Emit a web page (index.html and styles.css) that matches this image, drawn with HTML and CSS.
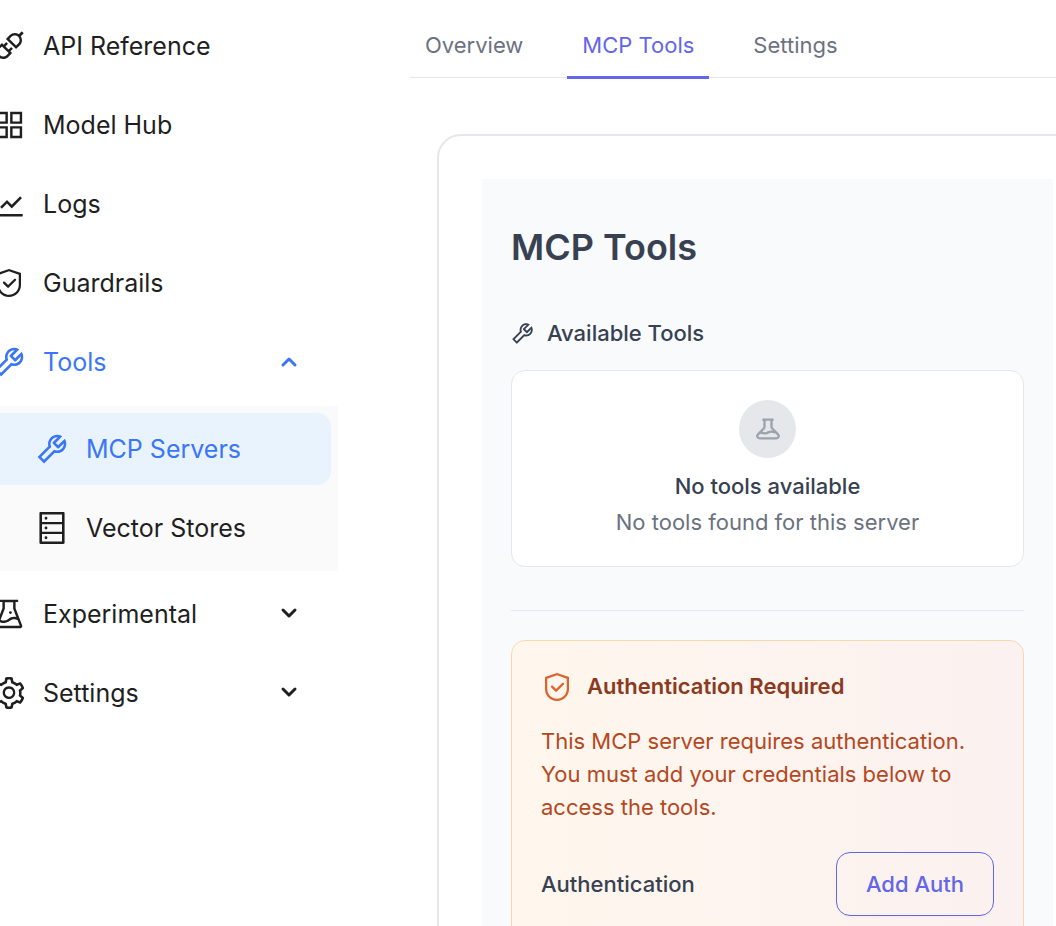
FILE: index.html
```html
<!DOCTYPE html>
<html lang="en">
<head>
<meta charset="utf-8">
<title>MCP Tools</title>
<link rel="stylesheet" href="styles.css">
</head>
<body>
<svg class="sprite" aria-hidden="true">
  <symbol id="api" viewBox="64 64 896 896"><path d="M917.7 148.8l-42.4-42.4c-1.6-1.6-3.6-2.3-5.7-2.3s-4.1.8-5.7 2.3l-76.1 76.1a199.27 199.27 0 00-112.1-34.3c-51.2 0-102.4 19.5-141.5 58.6L432.3 308.7a8.03 8.03 0 000 11.3L704 591.7c1.6 1.6 3.6 2.3 5.7 2.3 2 0 4.1-.8 5.7-2.3l101.9-101.9c68.9-69 77-175.7 24.3-253.5l76.1-76.1c3.1-3.2 3.1-8.3 0-11.4zM769.1 441.7l-59.4 59.4-186.8-186.8 59.4-59.4c24.9-24.9 58.1-38.7 93.4-38.7 35.3 0 68.4 13.7 93.4 38.7 24.9 24.9 38.7 58.1 38.7 93.4 0 35.3-13.8 68.4-38.7 93.4zm-190.2 105a8.03 8.03 0 00-11.3 0L501 613.3 410.7 523l66.7-66.7c3.1-3.1 3.1-8.2 0-11.3L441 408.6a8.03 8.03 0 00-11.3 0L363 475.3l-43-43a7.85 7.85 0 00-5.7-2.3c-2 0-4.1.8-5.7 2.3L206.8 534.2c-68.9 69-77 175.7-24.3 253.5l-76.1 76.1a8.03 8.03 0 000 11.3l42.4 42.4c1.6 1.6 3.6 2.3 5.7 2.3s4.1-.8 5.7-2.3l76.1-76.1c33.7 22.9 72.9 34.3 112.1 34.3 51.2 0 102.4-19.5 141.5-58.6l101.9-101.9c3.1-3.1 3.1-8.2 0-11.3l-43-43 66.7-66.7c3.1-3.1 3.1-8.2 0-11.3l-36.6-36.2zM441.7 769.1a131.32 131.32 0 01-93.4 38.7c-35.3 0-68.4-13.7-93.4-38.7a131.32 131.32 0 01-38.7-93.4c0-35.3 13.7-68.4 38.7-93.4l59.4-59.4 186.8 186.8-59.4 59.4z"/></symbol>
  <symbol id="grid" viewBox="64 64 896 896"><path fill-rule="evenodd" d="M144 144h336v336H144zM212 212v200h200V212zM544 144h336v336H544zM612 212v200h200V212zM144 544h336v336H144zM212 612v200h200V612zM544 544h336v336H544zM612 612v200h200V612z"/></symbol>
  <symbol id="chart" viewBox="64 64 896 896"><path d="M888 792H200V168c0-4.4-3.6-8-8-8h-56c-4.4 0-8 3.6-8 8v688c0 4.4 3.6 8 8 8h752c4.4 0 8-3.6 8-8v-56c0-4.4-3.6-8-8-8zM305.8 637.7c3.1 3.1 8.1 3.1 11.3 0l138.3-137.6L583 628.5c3.1 3.1 8.2 3.1 11.3 0l275.4-275.3c3.1-3.1 3.1-8.2 0-11.3l-39.6-39.6a8.03 8.03 0 00-11.3 0l-230 229.9L461.4 404a8.03 8.03 0 00-11.3 0L266.3 586.7a8.03 8.03 0 000 11.3l39.5 39.7z"/></symbol>
  <symbol id="shield" viewBox="0 0 1024 1024"><path d="M512 64L128 192v384c0 212.1 171.9 384 384 384s384-171.9 384-384V192L512 64zm312 512c0 172.3-139.7 312-312 312S200 748.3 200 576V246l312-110 312 110v330z"/><path d="M378.4 475.1a35.91 35.91 0 00-50.9 0 35.91 35.91 0 000 50.9l129.4 129.4 2.1 2.1a33.98 33.98 0 0048.1 0L730.6 434a33.98 33.98 0 000-48.1l-2.8-2.8a33.98 33.98 0 00-48.1 0L483 579.7 378.4 475.1z"/></symbol>
  <symbol id="tool" viewBox="64 64 896 896"><path d="M876.6 239.5c-.5-.9-1.2-1.8-2-2.5-5-5-13.1-5-18.1 0L684.2 409.3l-67.9-67.9L788.7 169c.8-.8 1.4-1.6 2-2.5 3.6-6.1 1.6-13.9-4.5-17.5-98.2-58-226.8-44.7-311.3 39.7-67 67-89.2 162-66.5 247.4l-293 293c-3 3-2.8 7.9.3 11l169.7 169.7c3.1 3.1 8.1 3.3 11 .3l292.9-292.9c85.5 22.8 180.5.7 247.6-66.4 84.4-84.5 97.7-213.1 39.7-311.3zM786 499.8c-58.1 58.1-145.3 69.3-214.6 33.6l-8.8 8.8-.1-.1-274 274.1-79.2-79.2 230.1-230.1s0 .1.1.1l52.8-52.8c-35.7-69.3-24.5-156.5 33.6-214.6a184.2 184.2 0 01144-53.5L537 318.9a32.05 32.05 0 000 45.3l124.5 124.5a32.05 32.05 0 0045.3 0l132.8-132.8c3.7 51.8-14.4 104.8-53.6 143.9z"/></symbol>
  <symbol id="database" viewBox="64 64 896 896"><path d="M832 64H192c-17.7 0-32 14.3-32 32v832c0 17.7 14.3 32 32 32h640c17.7 0 32-14.3 32-32V96c0-17.7-14.3-32-32-32zm-600 72h560v208H232V136zm560 480H232V408h560v208zm0 272H232V680h560v208zM304 240a40 40 0 1080 0 40 40 0 10-80 0zm0 272a40 40 0 1080 0 40 40 0 10-80 0zm0 272a40 40 0 1080 0 40 40 0 10-80 0z"/></symbol>
  <symbol id="flask" viewBox="64 64 896 896"><path d="M512 472a40 40 0 1080 0 40 40 0 10-80 0zm367 352.9L696.3 352V178H768v-68H256v68h71.7v174L145 824.9c-2.8 7.4-4.3 15.2-4.3 23.1 0 35.3 28.7 64 64 64h614.6c7.9 0 15.7-1.5 23.1-4.3 33-12.7 49.4-49.8 36.6-82.8zM395.7 364.7V180h232.6v184.7L719.2 600c-20.7-5.3-42.1-8-63.9-8-61.2 0-119.2 21.5-165.3 60a188.78 188.78 0 01-121.3 43.9c-32.7 0-64.1-8.3-91.8-23.7l118.8-307.5zM210.5 844l41.7-107.8c35.7 18.1 75.4 27.8 116.6 27.8 61.2 0 119.2-21.5 165.3-60 33.9-28.2 76.3-43.9 121.3-43.9 35 0 68.4 9.5 97.6 27.1L813.5 844h-603z"/></symbol>
  <symbol id="gear" viewBox="64 64 896 896"><path d="M924.8 625.7l-65.5-56c3.1-19 4.7-38.4 4.7-57.8s-1.6-38.8-4.7-57.8l65.5-56a32.03 32.03 0 009.3-35.2l-.9-2.6a443.74 443.74 0 00-79.7-137.9l-1.8-2.1a32.12 32.12 0 00-35.1-9.5l-81.3 28.9c-30-24.6-63.5-44-99.7-57.6l-15.7-85a32.05 32.05 0 00-25.8-25.7l-2.7-.5c-52.1-9.4-106.9-9.4-159 0l-2.7.5a32.05 32.05 0 00-25.8 25.7l-15.8 85.4a351.86 351.86 0 00-99 57.4l-81.9-29.1a32 32 0 00-35.1 9.5l-1.8 2.1a446.02 446.02 0 00-79.7 137.9l-.9 2.6c-4.5 12.5-.8 26.5 9.3 35.2l66.3 56.6c-3.1 18.8-4.6 38-4.6 57.1 0 19.2 1.5 38.4 4.6 57.1L99 625.5a32.03 32.03 0 00-9.3 35.2l.9 2.6c18.1 50.4 44.9 96.9 79.7 137.9l1.8 2.1a32.12 32.12 0 0035.1 9.5l81.9-29.1c29.8 24.5 63.1 43.9 99 57.4l15.8 85.4a32.05 32.05 0 0025.8 25.7l2.7.5a449.4 449.4 0 00159 0l2.7-.5a32.05 32.05 0 0025.8-25.7l15.7-85a350 350 0 0099.7-57.6l81.3 28.9a32 32 0 0035.1-9.5l1.8-2.1c34.8-41.1 61.6-87.5 79.7-137.9l.9-2.6c4.5-12.3.8-26.3-9.3-35zM788.3 465.9c2.5 15.1 3.8 30.6 3.8 46.1s-1.3 31-3.8 46.1l-6.6 40.1 74.7 63.9a370.03 370.03 0 01-42.6 73.6L721 702.8l-31.4 25.8c-23.9 19.6-50.5 35-79.3 45.8l-38.1 14.3-17.9 97a377.5 377.5 0 01-85 0l-17.9-97.2-37.8-14.5c-28.5-10.8-55-26.2-78.7-45.7l-31.4-25.9-93.4 33.2c-17-22.9-31.2-47.6-42.6-73.6l75.5-64.5-6.5-40c-2.4-14.9-3.7-30.3-3.7-45.5 0-15.3 1.2-30.6 3.7-45.5l6.5-40-75.5-64.5c11.3-26.1 25.6-50.7 42.6-73.6l93.4 33.2 31.4-25.9c23.7-19.5 50.2-34.9 78.7-45.7l37.9-14.3 17.9-97.2c28.1-3.2 56.8-3.2 85 0l17.9 97 38.1 14.3c28.7 10.8 55.4 26.2 79.3 45.8l31.4 25.8 92.8-32.9c17 22.9 31.2 47.6 42.6 73.6L781.8 426l6.5 39.9zM512 326c-97.2 0-176 78.8-176 176s78.8 176 176 176 176-78.8 176-176-78.8-176-176-176zm79.2 255.2A111.6 111.6 0 01512 614c-29.9 0-58-11.7-79.2-32.8A111.6 111.6 0 01400 502c0-29.9 11.7-58 32.8-79.2C454 401.6 482.1 390 512 390c29.9 0 58 11.6 79.2 32.8A111.6 111.6 0 01624 502c0 29.9-11.7 58-32.8 79.2z"/></symbol>
</svg>
<div class="app">
  <nav class="sidebar" aria-label="Main">
    <a class="item" href="#"><svg class="icon"><use href="#api"/></svg><span>API Reference</span></a>
    <a class="item" href="#"><svg class="icon"><use href="#grid"/></svg><span>Model Hub</span></a>
    <a class="item" href="#"><svg class="icon"><use href="#chart"/></svg><span>Logs</span></a>
    <a class="item" href="#"><svg class="icon"><use href="#shield"/></svg><span>Guardrails</span></a>
    <button class="item active" type="button" aria-expanded="true"><svg class="icon"><use href="#tool"/></svg><span>Tools</span><svg class="chevron" viewBox="0 0 20 20"><path d="M4 13l6-6 6 6"/></svg></button>
    <div class="submenu">
      <a class="item active selected" href="#"><svg class="icon"><use href="#tool"/></svg><span>MCP Servers</span></a>
      <a class="item" href="#"><svg class="icon"><use href="#database"/></svg><span>Vector Stores</span></a>
    </div>
    <button class="item" type="button" aria-expanded="false"><svg class="icon"><use href="#flask"/></svg><span>Experimental</span><svg class="chevron" viewBox="0 0 20 20"><path d="M4 6l6 6 6-6"/></svg></button>
    <button class="item" type="button" aria-expanded="false"><svg class="icon"><use href="#gear"/></svg><span>Settings</span><svg class="chevron" viewBox="0 0 20 20"><path d="M4 6l6 6 6-6"/></svg></button>
  </nav>
  <main class="main">
    <div class="tabs" role="tablist">
      <button class="tab" type="button" role="tab" aria-selected="false">Overview</button>
      <button class="tab current" type="button" role="tab" aria-selected="true">MCP Tools</button>
      <button class="tab" type="button" role="tab" aria-selected="false">Settings</button>
    </div>
    <section class="panel">
      <div class="content">
        <h1 class="title">MCP Tools</h1>
        <h2 class="subtitle"><svg class="icon-small"><use href="#tool"/></svg><span>Available Tools</span></h2>
        <div class="empty">
          <div class="badge"><svg viewBox="0 0 24 24"><path d="M19.428 15.428a2 2 0 00-1.022-.547l-2.387-.477a6 6 0 00-3.86.517l-.318.158a6 6 0 01-3.86.517L6.05 15.21a2 2 0 00-1.806.547M8 4h8l-1 1v5.172a2 2 0 00.586 1.414l5 5c1.26 1.26.367 3.414-1.415 3.414H4.828c-1.782 0-2.674-2.154-1.414-3.414l5-5A2 2 0 009 10.172V5L8 4z"/></svg></div>
          <p class="empty-title">No tools available</p>
          <p class="empty-text">No tools found for this server</p>
        </div>
        <hr class="divider">
        <div class="auth">
          <h3 class="auth-title"><svg class="icon"><use href="#shield"/></svg><span>Authentication Required</span></h3>
          <p class="auth-text">This MCP server requires authentication. You must add your credentials below to access the tools.</p>
          <div class="auth-row">
            <span>Authentication</span>
            <button class="add" type="button">Add Auth</button>
          </div>
        </div>
      </div>
    </section>
  </main>
</div>
</body>
</html>
```
FILE: styles.css
```css
* { box-sizing: border-box; }
body {
  margin: 0;
  height: 100vh;
  overflow: hidden;
  background: #fff;
  color: #1f1f1f;
  font-family: Inter, "Liberation Sans", sans-serif;
  font-size: 22px;
  line-height: 33px;
}
h1, h2, h3, p { margin: 0; }
button { font: inherit; cursor: pointer; }
.sprite { display: none; }
.app { display: flex; height: 100vh; overflow: hidden; }

.sidebar {
  display: flex;
  flex-direction: column;
  gap: 7px;
  flex: none;
  width: 378px;
  margin-left: -40px;
  padding-top: 10px;
  font-size: 25px;
}
.item {
  display: flex;
  align-items: center;
  gap: 18px;
  height: 72px;
  margin-right: 7px;
  padding: 0 32px 0 33px;
  border: 0;
  border-radius: 14px;
  background: none;
  color: #1f1f1f;
  text-align: left;
  text-decoration: none;
}
.item.active { color: #3b76f6; }
.item.selected { background: #e8f3fe; }
.submenu {
  display: flex;
  flex-direction: column;
  gap: 7px;
  margin-top: 1px;
  padding: 7px 0;
  background: #fafafa;
}
.submenu .item { padding-left: 76px; }
.icon { flex: none; width: 32px; height: 32px; fill: currentColor; }
.chevron {
  width: 20px;
  height: 20px;
  margin-left: auto;
  fill: none;
  stroke: currentColor;
  stroke-width: 3;
  stroke-linecap: round;
  stroke-linejoin: round;
}

.main { flex: 1; margin: 0 -42px 0 72px; }
.tabs { display: flex; gap: 29px; height: 78px; border-bottom: 1px solid #e5e7eb; }
.tab {
  height: 79px;
  padding: 14px 15px 0;
  border: 0;
  border-bottom: 3px solid transparent;
  background: none;
  color: #6b7280;
}
.tab.current { color: #6366e9; border-bottom-color: #6366e9; }

.panel {
  min-height: 100vh;
  margin: 56px 0 0 27px;
  padding: 43px;
  border: 2px solid #e5e7eb;
  border-radius: 24px;
}
.content { min-height: 100vh; padding: 43px 29px; background: #f9fafc; color: #374151; }
.title { font-size: 36px; font-weight: 600; line-height: 50px; }
.subtitle {
  display: flex;
  align-items: center;
  gap: 13px;
  margin: 45px 0 20px;
  font-size: 22px;
  font-weight: 500;
}
.icon-small { flex: none; width: 23px; height: 23px; fill: currentColor; }
.empty {
  padding: 29px 29px 27px;
  border: 1px solid #e5e7eb;
  border-radius: 14px;
  background: #fff;
  text-align: center;
}
.badge {
  display: grid;
  place-items: center;
  width: 57px;
  height: 58px;
  margin: 0 auto 12px;
  border-radius: 50%;
  background: #e5e7eb;
}
.badge svg {
  width: 28px;
  height: 28px;
  fill: none;
  stroke: #9ca3af;
  stroke-width: 2;
  stroke-linecap: round;
  stroke-linejoin: round;
}
.empty-title { margin-bottom: 3px; font-weight: 500; }
.empty-text { color: #6b7280; }
.divider { height: 1px; margin: 43px 0 29px; border: 0; background: #e5e7eb; }
.auth {
  padding: 29px;
  border: 1px solid #f9d8ad;
  border-radius: 14px;
  background: linear-gradient(to right, #fff7ed, #fdf4ef 50%, #fbf1f0);
  color: #b5471e;
}
.auth-title {
  display: flex;
  align-items: center;
  gap: 14px;
  margin-bottom: 22px;
  color: #8b3a1e;
  font-size: 22px;
  font-weight: 600;
}
.auth-title .icon { color: #dd622b; }
.auth-row {
  display: flex;
  align-items: center;
  justify-content: space-between;
  margin-top: 28px;
  color: #374151;
  font-weight: 500;
}
.add {
  height: 64px;
  padding: 0 29px;
  border: 1px solid #6366e9;
  border-radius: 14px;
  background: none;
  box-shadow: 0 2px 2px rgba(0, 0, 0, .02);
  color: #6366e9;
  font-weight: 500;
}
```
